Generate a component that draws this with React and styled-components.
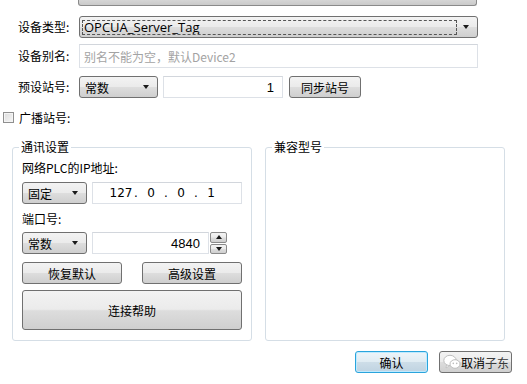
import React from 'react';
import styled, { createGlobalStyle, css } from 'styled-components';

const GlobalStyle = createGlobalStyle`
  html, body {
    margin: 0;
    padding: 0;
    background: #ffffff;
  }
  body {
    font-family: "Noto Sans CJK SC", "Noto Sans", sans-serif;
    font-size: 12px;
    color: #000;
  }
`;

const aeroGradient = css`
  background: linear-gradient(
    to bottom,
    #f3f3f3 0%,
    #ebebeb 48%,
    #dddddd 52%,
    #cfcfcf 100%
  );
`;

const Page = styled.div`
  width: 527px;
  height: 384px;
  overflow: hidden;
  box-sizing: border-box;
  display: flex;
  flex-direction: column;
`;

const TopStub = styled.div`
  margin-left: 78px;
  width: 399px;
  height: 6px;
  box-sizing: border-box;
  border: 1px solid #8a8a8a;
  border-top: none;
  border-radius: 0 0 3px 3px;
  background: linear-gradient(to bottom, #d6d6d6, #cacaca);
`;

const FormRow = styled.div`
  display: flex;
  align-items: center;
  height: ${(p) => p.h || 22}px;
  margin-top: ${(p) => p.top || 0}px;
`;

const Label = styled.div`
  width: 79px;
  box-sizing: border-box;
  padding-left: 18px;
  font-size: 12px;
  line-height: 1;
  white-space: nowrap;
`;

const Arrow = styled.span`
  width: 0;
  height: 0;
  border-left: 3.5px solid transparent;
  border-right: 3.5px solid transparent;
  border-${(p) => (p.up ? 'bottom' : 'top')}: 4px solid #1a1a1a;
`;

const Select = styled.div`
  width: ${(p) => p.w}px;
  height: 100%;
  box-sizing: border-box;
  border: 1px solid #707070;
  border-radius: 3px;
  ${aeroGradient};
  display: flex;
  align-items: center;
  padding: 0 8px 0 ${(p) => (p.focused ? 2 : 3)}px;
  gap: 6px;
  font-size: ${(p) => (p.big ? 13 : 12)}px;
  font-family: ${(p) =>
    p.big ? '"Open Sans", "Noto Sans", sans-serif' : 'inherit'};
`;

const SelectValue = styled.div`
  flex: 1;
  height: 15px;
  display: flex;
  align-items: center;
  box-sizing: border-box;
  padding-left: 1px;
  border: 1px dashed ${(p) => (p.focused ? '#555' : 'transparent')};
  white-space: nowrap;
  overflow: hidden;
`;

const Input = styled.div`
  width: ${(p) => p.w}px;
  height: 100%;
  box-sizing: border-box;
  border: 1px solid #dde1e7;
  border-top-color: #d2d6dc;
  background: #fff;
  display: flex;
  align-items: center;
  justify-content: ${(p) => (p.right ? 'flex-end' : 'flex-start')};
  padding: 0 ${(p) => (p.right ? 8 : 4)}px;
  margin-left: ${(p) => p.left || 0}px;
  font-family: "Liberation Sans", "Noto Sans", sans-serif;
  font-size: 13px;
`;

const Placeholder = styled.span`
  color: #a3a3a3;
  font-family: "Noto Sans CJK SC", sans-serif;
  font-size: 12px;
`;

const Button = styled.button`
  width: ${(p) => p.w}px;
  height: ${(p) => p.h || 22}px;
  box-sizing: border-box;
  margin: 0;
  margin-left: ${(p) => p.left || 0}px;
  padding: 0;
  border: 1px solid #707070;
  border-radius: 3px;
  ${aeroGradient};
  font-family: "Noto Sans CJK SC", sans-serif;
  font-size: 12px;
  color: #000;
  display: flex;
  align-items: center;
  justify-content: center;
  white-space: nowrap;
  overflow: hidden;
`;

const DefaultButton = styled(Button)`
  border-color: #2aa4dc;
  box-shadow: inset 0 0 0 1px #bfeaff;
  background: linear-gradient(
    to bottom,
    #eef5f9 0%,
    #e0ecf3 48%,
    #cddde8 52%,
    #bfd3e1 100%
  );
`;

const CheckRow = styled.label`
  display: flex;
  align-items: center;
  gap: 5px;
  margin-top: 13px;
  padding-left: 3px;
  height: 12px;
`;

const CheckBox = styled.span`
  width: 11px;
  height: 11px;
  box-sizing: border-box;
  border: 1px solid #8f8f8f;
  background: linear-gradient(135deg, #dcdcdc, #f6f6f6);
  box-shadow: inset 0 0 0 1px #f4f4f4;
`;

const Groups = styled.div`
  display: flex;
  gap: 13px;
  margin-top: 17px;
  padding-left: 12px;
`;

const Group = styled.fieldset`
  width: 240px;
  height: 201px;
  box-sizing: border-box;
  margin: 0;
  padding: 0 9px 0 9px;
  border: 1px solid #d5dee6;
  border-radius: 3px;
  display: flex;
  flex-direction: column;
`;

const Legend = styled.legend`
  padding: 0 2px;
  margin-left: -3px;
  font-size: 12px;
  line-height: 14px;
`;

const Caption = styled.div`
  height: 14px;
  line-height: 14px;
  margin-top: ${(p) => p.top}px;
  margin-bottom: ${(p) => p.bottom}px;
`;

const ButtonRow = styled.div`
  display: flex;
  justify-content: space-between;
  margin-top: ${(p) => p.top}px;
`;

const IpBox = styled(Input)`
  justify-content: flex-start;
  padding: 0 0 0 16px;
  font-size: 12px;
  font-family: "DejaVu Sans", sans-serif;
`;

const IpPart = styled.span`
  width: ${(p) => (p.dot ? 6 : 24)}px;
  text-align: center;
`;

const Spinner = styled.div`
  width: 17px;
  height: 100%;
  margin-left: 1px;
  display: flex;
  flex-direction: column;
  gap: 1px;
`;

const SpinHalf = styled.div`
  flex: 1;
  box-sizing: border-box;
  border: 1px solid #8a8a8a;
  border-radius: 2px;
  ${aeroGradient};
  display: flex;
  align-items: center;
  justify-content: center;
`;

const Footer = styled.div`
  display: flex;
  justify-content: flex-end;
  gap: 11px;
  margin-top: 10px;
  padding-right: 15px;
`;

const CancelButton = styled(Button)`
  justify-content: flex-start;
  padding-left: 3px;
  gap: 0;
`;

const WatermarkText = styled.span`
  font-size: 12px;
  color: #3a3a3a;
`;

function WeChatMark() {
  return (
    <svg width="18" height="16" viewBox="0 0 18 16">
      <ellipse cx="7" cy="6.5" rx="6.2" ry="5.2" fill="#fff" stroke="#bdbdbd" strokeWidth="1" />
      <path d="M3.5 11 L3 14 L6.5 11.6 Z" fill="#fff" stroke="#bdbdbd" strokeWidth="0.8" />
      <ellipse cx="12" cy="10" rx="5" ry="4.3" fill="#fff" stroke="#bdbdbd" strokeWidth="1" />
      <circle cx="10.3" cy="9.4" r="0.8" fill="#bdbdbd" />
      <circle cx="13.7" cy="9.4" r="0.8" fill="#bdbdbd" />
    </svg>
  );
}

function App() {
  return (
    <Page>
      <GlobalStyle />
      <TopStub />

      <FormRow top={10}>
        <Label>设备类型:</Label>
        <Select w={399} focused big>
          <SelectValue focused>OPCUA_Server_Tag</SelectValue>
          <Arrow />
        </Select>
      </FormRow>

      <FormRow top={6} h={24}>
        <Label>设备别名:</Label>
        <Input w={399}>
          <Placeholder>别名不能为空，默认Device2</Placeholder>
        </Input>
      </FormRow>

      <FormRow top={8}>
        <Label>预设站号:</Label>
        <Select w={79}>
          <SelectValue>常数</SelectValue>
          <Arrow />
        </Select>
        <Input w={120} left={5} right>
          1
        </Input>
        <Button w={72} left={6}>
          同步站号
        </Button>
      </FormRow>

      <CheckRow>
        <CheckBox />
        <span>广播站号:</span>
      </CheckRow>

      <Groups>
        <Group>
          <Legend>通讯设置</Legend>
          <Caption top={7} bottom={7}>
            网络PLC的IP地址:
          </Caption>
          <FormRow>
            <Select w={65}>
              <SelectValue>固定</SelectValue>
              <Arrow />
            </Select>
            <IpBox w={150} left={5}>
              <IpPart>127</IpPart>
              <IpPart dot>.</IpPart>
              <IpPart>0</IpPart>
              <IpPart dot>.</IpPart>
              <IpPart>0</IpPart>
              <IpPart dot>.</IpPart>
              <IpPart>1</IpPart>
            </IpBox>
          </FormRow>
          <Caption top={8} bottom={6}>
            端口号:
          </Caption>
          <FormRow>
            <Select w={65}>
              <SelectValue>常数</SelectValue>
              <Arrow />
            </Select>
            <Input w={117} left={5} right>
              4840
            </Input>
            <Spinner>
              <SpinHalf>
                <Arrow up />
              </SpinHalf>
              <SpinHalf>
                <Arrow />
              </SpinHalf>
            </Spinner>
          </FormRow>
          <ButtonRow top={8}>
            <Button w={100}>恢复默认</Button>
            <Button w={100}>高级设置</Button>
          </ButtonRow>
          <ButtonRow top={6}>
            <Button w={220} h={40}>
              连接帮助
            </Button>
          </ButtonRow>
        </Group>

        <Group>
          <Legend>兼容型号</Legend>
        </Group>
      </Groups>

      <Footer>
        <DefaultButton w={73}>确认</DefaultButton>
        <CancelButton w={73}>
          <WeChatMark />
          <span>取消</span>
          <WatermarkText>子东</WatermarkText>
        </CancelButton>
      </Footer>
    </Page>
  );
}

export default App;
